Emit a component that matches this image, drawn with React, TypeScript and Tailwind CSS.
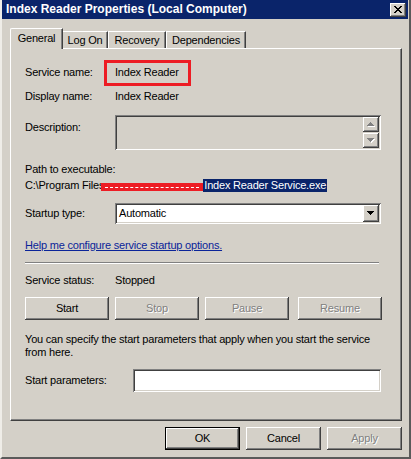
import React from "react";

// classic win32 bevels
const raised =
  "shadow-[inset_-1px_-1px_#404040,inset_1px_1px_#ffffff,inset_-2px_-2px_#808080]";
const sunken =
  "shadow-[inset_1px_1px_#808080,inset_-1px_-1px_#ffffff,inset_2px_2px_#404040,inset_-2px_-2px_#d4d0c8]";

function Arrow({ up, disabled }: { up?: boolean; disabled?: boolean }) {
  const pts = up ? "3.5,0 7,4 0,4" : "0,0 7,0 3.5,4";
  return (
    <svg width="8" height="5" viewBox="0 0 8 5" shapeRendering="crispEdges">
      {disabled && <polygon points={pts} fill="#ffffff" transform="translate(1,1)" />}
      <polygon points={pts} fill={disabled ? "#808080" : "#000000"} />
    </svg>
  );
}

function Btn({
  label,
  w,
  disabled,
  isDefault,
}: {
  label: string;
  w: string;
  disabled?: boolean;
  isDefault?: boolean;
}) {
  return (
    <div className={`${w} h-[23px] ${isDefault ? "border border-black" : ""}`}>
      <div
        className={`w-full h-full flex items-center justify-center bg-[#d4d0c8] ${raised} ${
          disabled ? "text-[#808080] [text-shadow:1px_1px_0_#ffffff]" : "text-black"
        }`}
      >
        {label}
      </div>
    </div>
  );
}

export default function App() {
  return (
    <div className="w-[411px] h-[459px] bg-[#d4d0c8] font-['Liberation_Sans',Arial,sans-serif] text-[11px] leading-[13px] tracking-[-0.2px] text-black flex flex-col border-l-2 border-l-[#efede8] border-r-2 border-r-[#5a5a5a] border-b-2 border-b-[#5a5a5a] pr-px overflow-hidden select-none">
      {/* title bar */}
      <div className="h-[19px] shrink-0 bg-[#0a246a] flex items-center justify-between pl-[4px] pr-[2px]">
        <span className="text-white font-bold text-[12px] tracking-normal">
          Index Reader Properties (Local Computer)
        </span>
        <div className={`w-[16px] h-[14px] bg-[#d4d0c8] flex items-center justify-center ${raised}`}>
          <svg width="8" height="7" viewBox="0 0 8 7" shapeRendering="crispEdges">
            <path
              d="M0 0h2v1H0zM6 0h2v1H6zM1 1h2v1H1zM5 1h2v1H5zM2 2h4v1H2zM3 3h2v1H3zM2 4h4v1H2zM1 5h2v1H1zM5 5h2v1H5zM0 6h2v1H0zM6 6h2v1H6z"
              fill="#000"
            />
          </svg>
        </div>
      </div>

      <div className="pl-[8px] pt-[9px] flex flex-col">
        {/* tabs */}
        <div className="flex items-end h-[21px] -mb-px relative z-10">
          <div className="w-[53px] h-[21px] bg-[#d4d0c8] border-t border-l border-t-white border-l-white border-r border-r-[#404040] shadow-[inset_-1px_0_#808080] rounded-tl-[2px] flex justify-center pt-[3px]">
            General
          </div>
          <div className="w-[45px] h-[17px] mb-px border-t border-t-white border-r border-r-[#404040] shadow-[inset_-1px_0_#808080] flex justify-center pt-[2px]">
            Log On
          </div>
          <div className="w-[58px] h-[17px] mb-px border-t border-l border-t-white border-l-white border-r border-r-[#404040] shadow-[inset_-1px_0_#808080] flex justify-center pt-[2px]">
            Recovery
          </div>
          <div className="w-[80px] h-[17px] mb-px border-t border-l border-t-white border-l-white border-r border-r-[#404040] shadow-[inset_-1px_0_#808080] flex justify-center pt-[2px]">
            Dependencies
          </div>
        </div>

        {/* tab page */}
        <div className="w-[392px] h-[373px] border-t border-l border-t-white border-l-white border-r border-b border-r-[#404040] border-b-[#404040] shadow-[inset_-1px_-1px_#808080] pl-[14px] pt-[17px] flex flex-col">
          <div className="flex h-[13px]">
            <span className="w-[90px]">Service name:</span>
            <span className="relative">
              Index Reader
              <span className="absolute -left-[11px] -top-[6px] w-[87px] h-[26px] border-[3px] border-[#ed1c24]" />
            </span>
          </div>

          <div className="flex h-[13px] mt-[11px]">
            <span className="w-[90px]">Display name:</span>
            <span>Index Reader</span>
          </div>

          <div className="flex mt-[12px]">
            <span className="w-[90px] pt-[6px]">Description:</span>
            <div className={`w-[266px] h-[35px] bg-[#d4d0c8] ${sunken} flex justify-end p-[2px]`}>
              <div className="w-[16px] flex flex-col justify-between">
                <div className={`h-[15px] bg-[#d4d0c8] ${raised} flex items-center justify-center`}>
                  <Arrow up disabled />
                </div>
                <div className={`h-[15px] bg-[#d4d0c8] ${raised} flex items-center justify-center`}>
                  <Arrow disabled />
                </div>
              </div>
            </div>
          </div>

          <div className="h-[13px] mt-[13px]">Path to executable:</div>
          <div className="flex h-[13px] mt-[3px] whitespace-nowrap">
            <span>C:\Program Files</span>
            <span className="relative -ml-[3px] w-[102px] h-[8px] mt-[4px] bg-[#ed1c24] flex items-center px-[4px]">
              <span className="w-full border-t border-dashed border-white" />
            </span>
            <span className="bg-[#0a246a] text-white px-px">Index Reader Service.exe</span>
          </div>

          <div className="flex items-center mt-[11px]">
            <span className="w-[90px]">Startup type:</span>
            <div className={`w-[266px] h-[21px] bg-white ${sunken} flex items-center pl-[4px] pr-[2px]`}>
              <span className="flex-1">Automatic</span>
              <div className={`w-[16px] h-[17px] bg-[#d4d0c8] ${raised} flex items-center justify-center`}>
                <Arrow />
              </div>
            </div>
          </div>

          <div className="h-[13px] mt-[15px]">
            <span className="text-[#0b2499] underline underline-offset-[1px]">
              Help me configure service startup options.
            </span>
          </div>

          <div className="w-[354px] mt-[10px] border-t border-t-[#808080] border-b border-b-white" />

          <div className="flex h-[13px] mt-[10px]">
            <span className="w-[90px]">Service status:</span>
            <span>Stopped</span>
          </div>

          <div className="flex mt-[10px]">
            <Btn label="Start" w="w-[84px]" />
            <div className="ml-[6px]">
              <Btn label="Stop" w="w-[84px]" disabled />
            </div>
            <div className="ml-[6px]">
              <Btn label="Pause" w="w-[84px]" disabled />
            </div>
            <div className="ml-[9px]">
              <Btn label="Resume" w="w-[84px]" disabled />
            </div>
          </div>

          <p className="mt-[13px] whitespace-nowrap">
            You can specify the start parameters that apply when you start the service
            <br />
            from here.
          </p>

          <div className="flex items-center mt-[10px]">
            <span className="w-[108px]">Start parameters:</span>
            <div className={`w-[248px] h-[23px] bg-white ${sunken}`} />
          </div>
        </div>

        {/* dialog buttons */}
        <div className="w-[392px] flex justify-end gap-[6px] mt-[6px]">
          <Btn label="OK" w="w-[75px]" isDefault />
          <Btn label="Cancel" w="w-[75px]" />
          <Btn label="Apply" w="w-[75px]" disabled />
        </div>
      </div>
    </div>
  );
}
